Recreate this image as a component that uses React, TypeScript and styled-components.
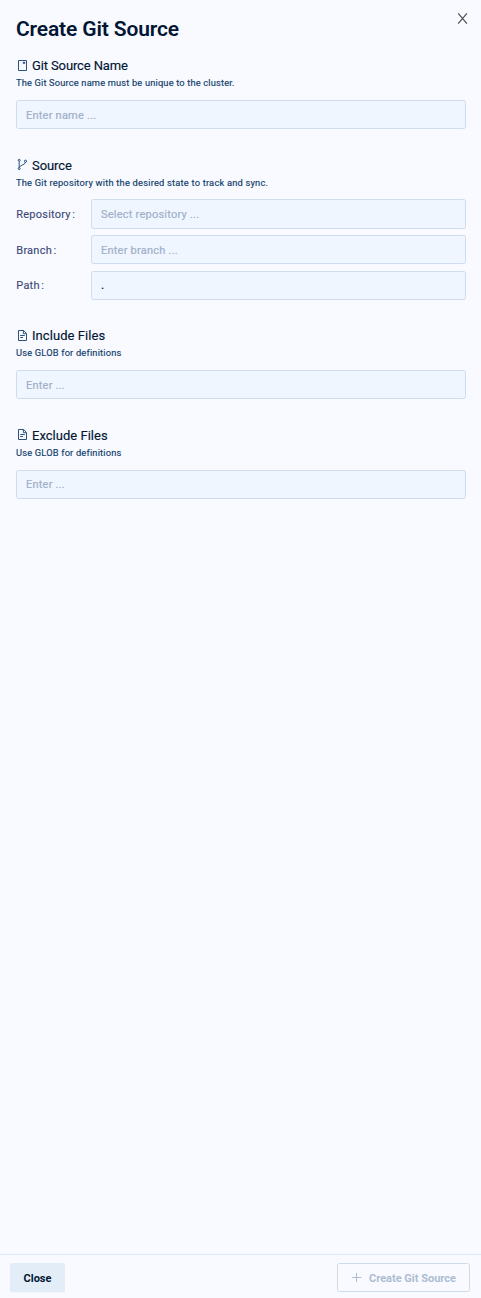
import React from 'react';
import styled, { createGlobalStyle } from 'styled-components';

const GlobalStyle = createGlobalStyle`
  * { box-sizing: border-box; }
  body { margin: 0; background: #f8faff; font-family: Roboto, "Liberation Sans", sans-serif; }
`;

const Drawer = styled.div`
  display: flex;
  flex-direction: column;
  height: 1298px;
  background: #f8faff;
  color: #021633;
`;

const Header = styled.header`
  display: flex;
  justify-content: space-between;
  align-items: flex-start;
  height: 56px;
  padding: 12px 12px 0 16px;
`;

const Title = styled.h1`
  margin: 4px 0 0;
  font-size: 21px;
  line-height: 26px;
  font-weight: 600;
  letter-spacing: -0.14px;
  white-space: nowrap;
`;

const IconButton = styled.button`
  display: flex;
  padding: 0;
  border: 0;
  background: none;
  color: #4c5056;
`;

const Icon = styled.svg`
  flex: none;
  fill: none;
  stroke: currentColor;
`;

const Form = styled.main`
  flex: 1;
  display: flex;
  flex-direction: column;
  padding: 0 15px 0 16px;
`;

const Section = styled.section<{ $height: number }>`
  height: ${(p) => p.$height}px;
`;

const Heading = styled.h2<{ $spacing: number; $raised?: boolean }>`
  display: flex;
  align-items: center;
  gap: 4px;
  margin: 0;
  height: 19px;
  font-size: 13px;
  font-weight: 400;
  letter-spacing: ${(p) => p.$spacing}px;
  white-space: nowrap;
  -webkit-text-stroke: 0.15px #021633;
  svg { color: #2a5380; margin-bottom: ${(p) => (p.$raised ? 2 : 0)}px; }
`;

const Hint = styled.p<{ $spacing: number }>`
  margin: 0;
  height: 16px;
  font-size: 9.3px;
  line-height: 16px;
  font-weight: 400;
  color: #113d6b;
  -webkit-text-stroke: 0.15px #113d6b;
  letter-spacing: ${(p) => p.$spacing}px;
  white-space: nowrap;
`;

const Input = styled.input<{ $height?: number; $drop?: number; $strong?: boolean }>`
  display: block;
  width: 100%;
  height: ${(p) => p.$height ?? 29}px;
  padding: ${(p) => p.$drop ?? 0}px 9px 0;
  border: 1px solid #cfdcee;
  border-radius: 2.5px;
  background: #f0f6ff;
  color: #021633;
  font: ${(p) => (p.$strong ? 600 : 400)} 11px Roboto, "Liberation Sans", sans-serif;
  letter-spacing: 0.23px;
  outline: none;
  &::placeholder { color: #a0b0ca; opacity: 1; -webkit-text-stroke: 0.2px #a0b0ca; }
`;

const Single = styled.div`
  margin-top: 9px;
`;

const Fields = styled.div`
  display: grid;
  grid-template-rows: 30px 29px 29px;
  row-gap: 6px;
  margin-top: 8px;
`;

const Row = styled.label<{ $gap?: number }>`
  display: grid;
  grid-template-columns: 75px 1fr;
  align-items: center;
  margin-top: ${(p) => p.$gap ?? 0}px;
`;

const Label = styled.span<{ $drop?: number }>`
  display: flex;
  gap: 1.5px;
  padding: ${(p) => p.$drop ?? 0}px 0 0 0.3px;
  font-size: 11px;
  color: #3a4677;
  letter-spacing: 0.23px;
  -webkit-text-stroke: 0.1px #3a4677;
`;

const Footer = styled.footer`
  display: flex;
  justify-content: space-between;
  height: 44px;
  padding: 8px 11px 0 10px;
  border-top: 1px solid #dfeaf6;
`;

const Button = styled.button<{ $outline?: boolean }>`
  display: flex;
  align-items: center;
  justify-content: center;
  gap: 6px;
  width: ${(p) => (p.$outline ? 133 : 55)}px;
  height: 29px;
  padding: 2px 0 0;
  border: ${(p) => (p.$outline ? '1px solid #cfdaea' : '0')};
  border-radius: 2.5px;
  background: ${(p) => (p.$outline ? 'transparent' : '#e2edf8')};
  box-shadow: ${(p) => (p.$outline ? 'none' : '0 1px 0 rgba(0, 0, 0, 0.02)')};
  color: ${(p) => (p.$outline ? '#acbcd3' : '#021633')};
  font: 700 11px Roboto, "Liberation Sans", sans-serif;
  white-space: nowrap;
  svg { margin-top: -3px; }
`;

const BookIcon = () => (
  <Icon width="12" height="13" viewBox="0 0 12 13">
    <path d="M2.5 1.5h8v10h-8z" />
    <path d="M7 3h2v1.6h-2z" fill="currentColor" strokeWidth="0.4" />
  </Icon>
);

const BranchIcon = () => (
  <Icon width="12" height="13" viewBox="0 0 12 13" strokeWidth="1">
    <circle cx="3.2" cy="2.3" r="1" />
    <circle cx="3.2" cy="10.6" r="1" />
    <circle cx="9.5" cy="3.2" r="1.1" />
    <path d="M3.2 3.3v6.3M9.4 4.3C9.4 7.2 3.8 6.6 3.4 9.6" />
  </Icon>
);

const FileIcon = () => (
  <Icon width="12" height="13" viewBox="0 0 12 13">
    <path d="M2.5 1.5H7.7L10.5 4.5V11.5H2.5Z" />
    <path d="M7.4 1.6V4.7H10.4" />
    <path d="M4.2 6.5H8.8M4.2 8.5H7" />
  </Icon>
);

const CloseIcon = () => (
  <Icon width="13" height="13" viewBox="0 0 13 13" strokeWidth="1.2">
    <path d="M2.2 1.4L10.9 11.6M10.9 1.4L2.2 11.6" />
  </Icon>
);

const PlusIcon = () => (
  <Icon width="12" height="12" viewBox="0 0 12 12">
    <path d="M1.2 6.5H10.4M5.5 2V11" />
  </Icon>
);

export default function App() {
  return (
    <Drawer>
      <GlobalStyle />
      <Header>
        <Title>Create Git Source</Title>
        <IconButton aria-label="Close drawer"><CloseIcon /></IconButton>
      </Header>
      <Form>
        <Section $height={100}>
          <Heading $spacing={-0.12}><BookIcon />Git Source Name</Heading>
          <Hint $spacing={0.16}>The Git Source name must be unique to the cluster.</Hint>
          <Single><Input $drop={2} placeholder="Enter name ..." /></Single>
        </Section>
        <Section $height={170}>
          <Heading $spacing={-0.08} $raised><BranchIcon />Source</Heading>
          <Hint $spacing={0.21}>The Git repository with the desired state to track and sync.</Hint>
          <Fields>
            <Row><Label>Repository<span>:</span></Label><Input $height={30} placeholder="Select repository ..." /></Row>
            <Row><Label $drop={2}>Branch<span>:</span></Label><Input $drop={2} placeholder="Enter branch ..." /></Row>
            <Row $gap={1}><Label>Path<span>:</span></Label><Input $strong defaultValue="." /></Row>
          </Fields>
        </Section>
        <Section $height={100}>
          <Heading $spacing={0.07}><FileIcon />Include Files</Heading>
          <Hint $spacing={0.18}>Use GLOB for definitions</Hint>
          <Single><Input $drop={2} placeholder="Enter ..." /></Single>
        </Section>
        <Section $height={100}>
          <Heading $spacing={0.02} $raised><FileIcon />Exclude Files</Heading>
          <Hint $spacing={0.18}>Use GLOB for definitions</Hint>
          <Single><Input placeholder="Enter ..." /></Single>
        </Section>
      </Form>
      <Footer>
        <Button>Close</Button>
        <Button $outline disabled><PlusIcon />Create Git Source</Button>
      </Footer>
    </Drawer>
  );
}
